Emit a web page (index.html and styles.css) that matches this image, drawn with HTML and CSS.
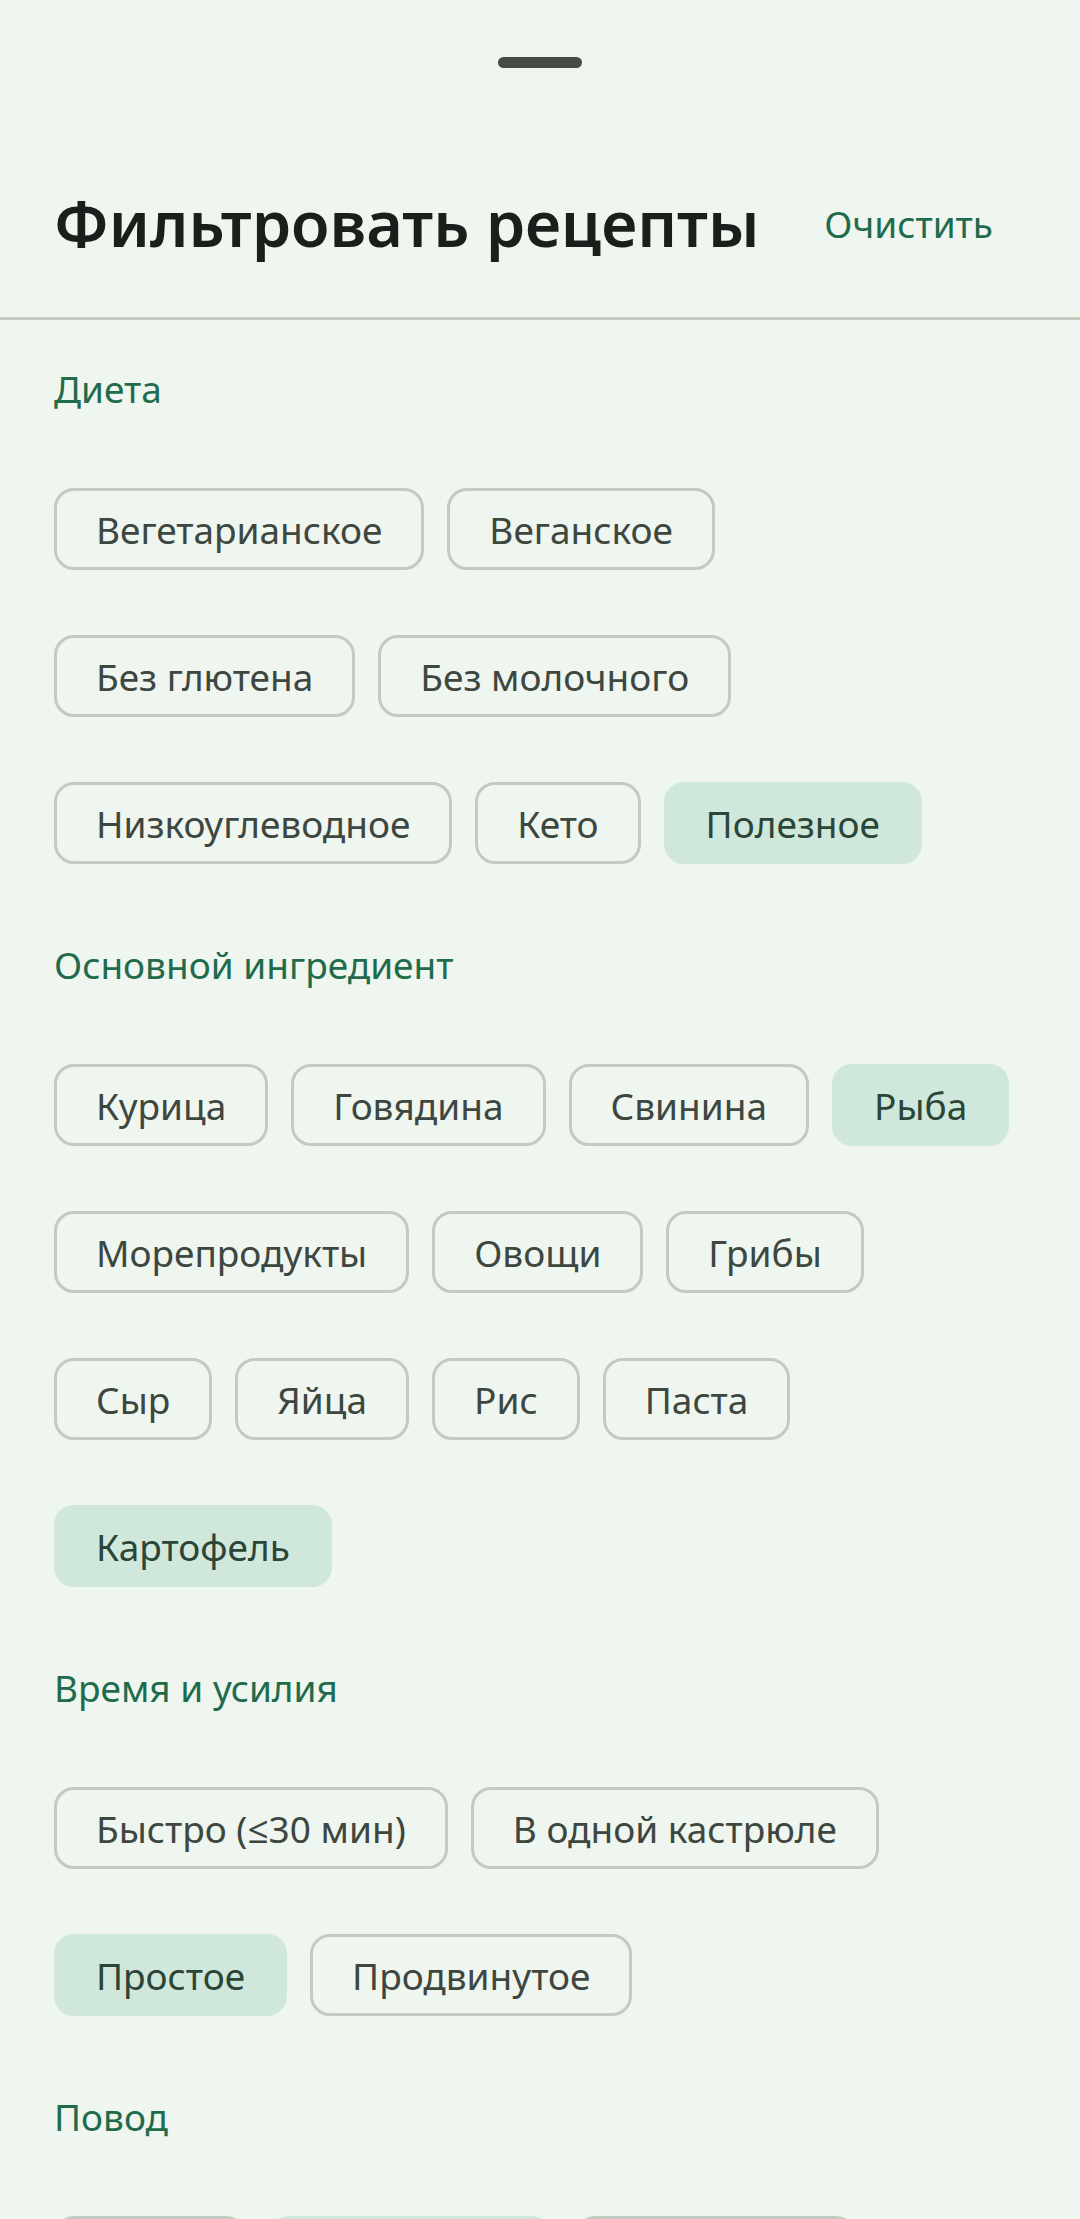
FILE: index.html
```html
<!DOCTYPE html>
<html lang="ru">
<head>
    <meta charset="UTF-8">
    <meta name="viewport" content="width=device-width, initial-scale=1.0">
    <title>Фильтровать рецепты</title>
    <link rel="stylesheet" href="styles.css">
</head>
<body>
    <div class="sheet">
        <div class="handle"></div>

        <div class="sheet-header">
            <h1>Фильтровать рецепты</h1>
            <button class="clear-btn">Очистить</button>
        </div>

        <div class="filters">
            <section class="group">
                <h2>Диета</h2>
                <div class="chips">
                    <div class="chip-row">
                        <span class="chip">Вегетарианское</span>
                        <span class="chip">Веганское</span>
                    </div>
                    <div class="chip-row">
                        <span class="chip">Без глютена</span>
                        <span class="chip">Без молочного</span>
                    </div>
                    <div class="chip-row">
                        <span class="chip">Низкоуглеводное</span>
                        <span class="chip">Кето</span>
                        <span class="chip selected">Полезное</span>
                    </div>
                </div>
            </section>

            <section class="group">
                <h2>Основной ингредиент</h2>
                <div class="chips">
                    <div class="chip-row">
                        <span class="chip">Курица</span>
                        <span class="chip">Говядина</span>
                        <span class="chip">Свинина</span>
                        <span class="chip selected">Рыба</span>
                    </div>
                    <div class="chip-row">
                        <span class="chip">Морепродукты</span>
                        <span class="chip">Овощи</span>
                        <span class="chip">Грибы</span>
                    </div>
                    <div class="chip-row">
                        <span class="chip">Сыр</span>
                        <span class="chip">Яйца</span>
                        <span class="chip">Рис</span>
                        <span class="chip">Паста</span>
                    </div>
                    <div class="chip-row">
                        <span class="chip selected">Картофель</span>
                    </div>
                </div>
            </section>

            <section class="group">
                <h2>Время и усилия</h2>
                <div class="chips">
                    <div class="chip-row">
                        <span class="chip">Быстро (≤30 мин)</span>
                        <span class="chip">В одной кастрюле</span>
                    </div>
                    <div class="chip-row">
                        <span class="chip selected">Простое</span>
                        <span class="chip">Продвинутое</span>
                    </div>
                </div>
            </section>

            <section class="group">
                <h2>Повод</h2>
                <div class="chips">
                    <div class="chip-row">
                        <span class="chip">Будни</span>
                        <span class="chip selected">Праздники</span>
                        <span class="chip">Для гостей</span>
                    </div>
                </div>
            </section>
        </div>
    </div>
</body>
</html>
```

FILE: styles.css
```css
html, body {
    margin: 0;
    padding: 0;
}

body {
    font-family: "Noto Sans", "Open Sans", sans-serif;
    background-color: #eff5ef;
    color: #3d4740;
    height: 2219px;
    overflow: hidden;
}

.sheet {
    display: flex;
    flex-direction: column;
}

.handle {
    width: 84px;
    height: 11px;
    margin: 57px auto 0;
    border-radius: 6px;
    background-color: #454c45;
}

.sheet-header {
    display: flex;
    align-items: center;
    justify-content: space-between;
    padding: 115px 54px 54px 54px;
    border-bottom: 3px solid #c4c9c2;
}

h1 {
    margin: 0;
    font-size: 63px;
    line-height: 80px;
    font-weight: 600;
    color: #1a1f1b;
}

.clear-btn {
    font-family: inherit;
    font-size: 37px;
    line-height: 49px;
    color: #1f6b4c;
    background: none;
    border: none;
    padding: 0 33px;
    cursor: pointer;
}

.filters {
    padding: 44px 54px 0 54px;
}

.group + .group {
    margin-top: 76px;
}

h2 {
    margin: 0 0 75px 0;
    font-size: 37px;
    line-height: 49px;
    font-weight: 400;
    color: #1f6b4c;
}

.chips {
    display: flex;
    flex-direction: column;
    gap: 65px;
}

.chip-row {
    display: flex;
    gap: 23px;
}

.chip {
    display: flex;
    align-items: center;
    box-sizing: border-box;
    height: 82px;
    padding: 0 39px;
    border: 3px solid #c5c9c3;
    border-radius: 20px;
    font-size: 37px;
    line-height: 49px;
    color: #3d4740;
}

.chip.selected {
    background-color: #d0e8dc;
    border-color: #d0e8dc;
    color: #2b4536;
}
```
